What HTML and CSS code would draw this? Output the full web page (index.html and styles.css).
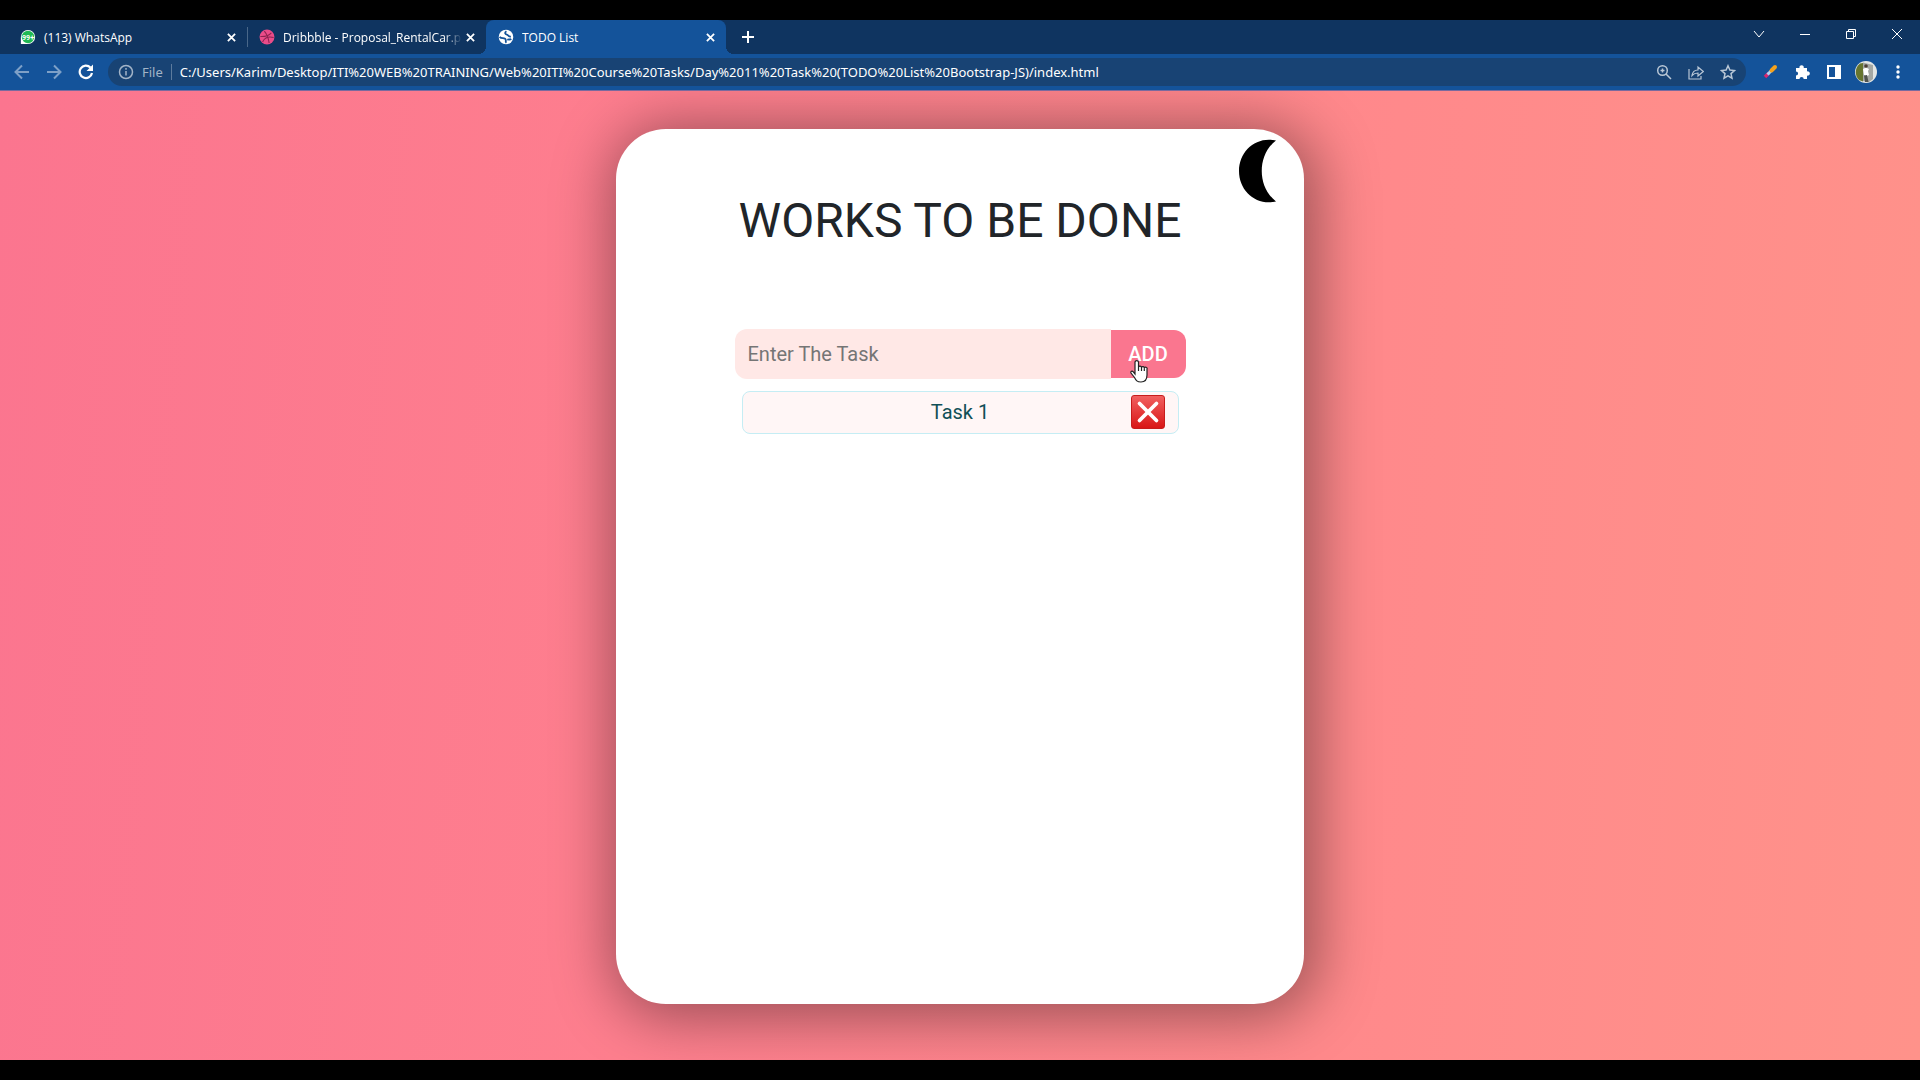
FILE: index.html
```html
<!DOCTYPE html>
<html lang="en">
<head>
<meta charset="utf-8">
<meta name="viewport" content="width=device-width, initial-scale=1">
<title>TODO List</title>
<link rel="stylesheet" href="styles.css">
</head>
<body>
<div class="screen">
  <header class="browser">
    <div class="tab-strip">
      <div class="tab">
        <svg class="tab-icon" viewBox="0 0 18 18"><path d="M1 17V9A8 8 0 1 1 9 17Z" fill="#fff"/><circle cx="9" cy="9" r="7" fill="#20b954"/><text x="9" y="12" class="badge-text">99+</text></svg>
        <span class="tab-title">(113) WhatsApp</span>
        <button class="tab-close" aria-label="Close WhatsApp tab"><svg viewBox="0 0 10 10"><path d="M1 1l8 8M9 1l-8 8"/></svg></button>
      </div>
      <div class="tab tab-second">
        <svg class="tab-icon" viewBox="0 0 18 18"><circle cx="9" cy="9" r="8.400" fill="#ea4c89"/><path d="M6 2.400c3 3.500 4.600 7.600 5.400 13.400M1.500 8.500c5 .2 9.300-.6 12.400-4.200M4 14.600c2.300-4.800 6.600-6.600 12.500-5" fill="none" stroke="#8d2350" stroke-width="1.200"/></svg>
        <span class="tab-title tab-title-fade">Dribbble - Proposal_RentalCar.pn</span>
        <button class="tab-close" aria-label="Close Dribbble tab"><svg viewBox="0 0 10 10"><path d="M1 1l8 8M9 1l-8 8"/></svg></button>
      </div>
      <div class="tab tab-active">
        <svg class="tab-icon" viewBox="0 0 18 18"><circle cx="9" cy="9" r="8.200" fill="#fff"/><path d="M1.800 8.800C4 11.500 6 9.500 8 11s-.5 3 1.500 4.500M9.500 2.500c-2.500 1.500-1.500 3.500.5 3.800s1 2.500 4.500 2.200M10.500 12.200c2-1 2.500.3 4.500-1" fill="none" stroke="#14539a" stroke-width="2"/></svg>
        <span class="tab-title">TODO List</span>
        <button class="tab-close" aria-label="Close TODO List tab"><svg viewBox="0 0 10 10"><path d="M1 1l8 8M9 1l-8 8"/></svg></button>
      </div>
      <button class="new-tab" aria-label="New tab"><svg viewBox="0 0 12 12"><path d="M6 0v12M0 6h12"/></svg></button>
      <div class="window-controls">
        <button aria-label="Search tabs"><svg class="thin" viewBox="0 0 12 12"><path d="M1 3l5 6 5-6"/></svg></button>
        <button aria-label="Minimize"><svg class="thin" viewBox="0 0 12 12"><path d="M1 6.500h10"/></svg></button>
        <button aria-label="Restore"><svg class="thin" viewBox="0 0 12 12"><path d="M1.500 3.500h7v7h-7zM3.500 3.500v-2h7v7h-2"/></svg></button>
        <button aria-label="Close"><svg class="thin" viewBox="0 0 12 12"><path d="M1 1l10 10M11 1L1 11"/></svg></button>
      </div>
    </div>
    <div class="toolbar">
      <nav class="nav-buttons">
        <button class="dim" aria-label="Back"><svg viewBox="0 0 16 16"><path d="M15 8H2M8 1.500L1.500 8 8 14.500"/></svg></button>
        <button class="dim" aria-label="Forward"><svg viewBox="0 0 16 16"><path d="M1 8h13M8 1.500L14.500 8 8 14.500"/></svg></button>
        <button aria-label="Reload"><svg viewBox="0 0 16 16"><path d="M14 9A6.200 6.200 0 1 1 12.400 3.600" stroke-width="2.200"/><path d="M15 .5V7H8.500Z" fill="#fff" stroke="none"/></svg></button>
      </nav>
      <div class="address">
        <svg class="info" viewBox="0 0 16 16"><circle cx="8" cy="8" r="6.500"/><path d="M8 7v4.500M8 4v1.700"/></svg>
        <span class="scheme">File</span>
        <input class="url" aria-label="Address" value="C:/Users/Karim/Desktop/ITI%20WEB%20TRAINING/Web%20ITI%20Course%20Tasks/Day%2011%20Task%20(TODO%20List%20Bootstrap-JS)/index.html">
        <div class="address-actions">
          <button aria-label="Zoom"><svg viewBox="0 0 16 16"><circle cx="6.500" cy="6.500" r="4.800"/><path d="M10 10l5 5M6.500 4.500v4M4.500 6.500h4"/></svg></button>
          <button aria-label="Share"><svg viewBox="0 0 16 16"><path d="M1 5v10h12v-3M4 11.500C4.500 8 7 6 10 6V3l5.300 4.500L10 12V9C7.500 9 5.500 9.800 4 11.500Z" stroke-width="1.200"/></svg></button>
          <button aria-label="Bookmark"><svg viewBox="0 0 16 16"><path d="M8 1.800l1.900 4.300 4.600.4-3.500 3.100 1 4.600L8 11.800l-4 2.400 1-4.600-3.500-3.100 4.600-.4Z"/></svg></button>
        </div>
      </div>
      <div class="extensions">
        <button aria-label="Color picker"><svg viewBox="0 0 16 16"><path d="M3 13l4-4" stroke="#d7266f" stroke-width="3.500"/><path d="M5.500 10.500l4-4" stroke="#a9d2f5" stroke-width="3"/><path d="M9.500 6.500L13 3" stroke="#f6a21c" stroke-width="4" stroke-linecap="round"/></svg></button>
        <button aria-label="Extensions"><svg viewBox="0 0 16 16"><path d="M2 4h3.500a2.200 2.200 0 1 1 4.200 0H13v3.400a2.200 2.200 0 1 1 0 4.200V15H9.700a2.100 2.100 0 0 0-4.200 0H2v-3.400a2.100 2.100 0 0 0 0-4.200Z" fill="#fff" stroke="none"/></svg></button>
        <button aria-label="Side panel"><svg viewBox="0 0 16 16"><path d="M2 2h12v12H2Z" stroke-width="2"/><path d="M9 2h5v12H9Z" fill="#fff" stroke="none"/></svg></button>
        <button class="profile" aria-label="Profile"><svg viewBox="0 0 22 22"><circle cx="11" cy="11" r="11" fill="#e3e6e5"/><path d="M5 2.600A11 11 0 0 0 4 19l4 1.500V2Z" fill="#66752f"/><path d="M8 1.500l10 2.500v14L14 21l-6-1Z" fill="#a5a8a4"/><path d="M8 8l3-1.500L14 8l-1 2 1 4-3 1.500L9 14Z" fill="#fff"/><circle cx="11" cy="5" r="1.800" fill="#4c3e37"/><path d="M9 14.500l3-.5 1.500 7H10Z" fill="#50534f"/></svg></button>
        <button aria-label="Menu"><svg viewBox="0 0 16 16"><g fill="#fff" stroke="none"><circle cx="8" cy="3" r="1.700"/><circle cx="8" cy="8" r="1.700"/><circle cx="8" cy="13" r="1.700"/></g></svg></button>
      </div>
    </div>
  </header>
  <main class="page">
    <section class="card">
      <button class="theme" aria-label="Dark mode"><svg viewBox="0 0 38 64"><path d="M38 1.500C18 -3 1 12 1 32S18 67 38 62.500C19 48 19 16 38 1.500Z"/></svg></button>
      <h1>WORKS TO BE DONE</h1>
      <form class="task-form">
        <input class="task-input" type="text" placeholder="Enter The Task" aria-label="Task">
        <button class="add" type="button">ADD
          <svg class="pointer" viewBox="0 0 18 24"><path d="M5 15V3a1.800 1.800 0 0 1 3.500 0v5a1.600 1.600 0 0 1 3 .3 1.500 1.500 0 0 1 2.800.8 1.400 1.400 0 0 1 2.700.9v6c0 4-2 7-6 7-4 0-5-1.500-6.500-4.500L1 14c-.6-1.500 1-2.600 2.300-1.200ZM8.500 8v4M11.500 8.500v3.500M14.300 9.300V12"/></svg>
        </button>
      </form>
      <ul class="tasks">
        <li class="task">
          <span>Task 1</span>
          <button class="delete" type="button" aria-label="Delete Task 1"><svg viewBox="0 0 34 34"><path d="M8 8l18 18M26 8L8 26"/></svg></button>
        </li>
      </ul>
    </section>
  </main>
</div>
</body>
</html>
```
FILE: styles.css
```css
* { box-sizing: border-box; }
body { margin: 0; background: #000; }
button { padding: 0; border: 0; background: none; color: inherit; font: inherit; }
svg { display: block; }

.screen {
  display: flex;
  flex-direction: column;
  min-height: 100vh;
  padding: 20px 0;
}

/* Browser frame */
.browser {
  color: #fff;
  font-family: "Open Sans", sans-serif;
  font-size: 12px;
}
.browser svg { fill: none; stroke: #fff; stroke-width: 2; }
.tab-strip {
  display: flex;
  height: 34px;
  background: #0f3460;
}
.tab {
  display: flex;
  align-items: center;
  width: 240px;
  padding: 0 8px 0 20px;
}
.tab:first-child { width: 247px; }
.tab-second {
  position: relative;
  width: 239px;
  padding-left: 12px;
}
.tab-second::before {
  content: "";
  position: absolute;
  left: 0;
  top: 7px;
  width: 1px;
  height: 20px;
  background: #496789;
}
.tab-active {
  position: relative;
  padding-left: 12px;
  border-radius: 8px 8px 0 0;
  background: #14539a;
}
.tab-active::before,
.tab-active::after {
  content: "";
  position: absolute;
  bottom: 0;
  width: 8px;
  height: 8px;
}
.tab-active::before { left: -8px; background: radial-gradient(circle at 0 0, #0f3460 8px, #14539a 8px); }
.tab-active::after { right: -8px; background: radial-gradient(circle at 100% 0, #0f3460 8px, #14539a 8px); }
.browser .tab-icon { flex: none; width: 16px; height: 16px; margin-right: 8px; stroke: none; }
.badge-text { fill: #fff; font: bold 8px Roboto, sans-serif; text-anchor: middle; }
.tab-title { flex: 1; overflow: hidden; white-space: nowrap; }
.tab-title-fade { mask-image: linear-gradient(90deg, #000 90%, transparent); }
.tab-close { display: grid; place-items: center; width: 16px; height: 16px; }
.tab-close svg { width: 9px; height: 9px; }
.new-tab { display: grid; place-items: center; width: 44px; }
.new-tab svg { width: 12px; height: 12px; }
.window-controls { display: flex; margin-left: auto; }
.window-controls button { display: grid; place-items: center; width: 46px; height: 28px; }
.window-controls svg { width: 12px; height: 12px; }
.browser .thin { stroke-width: 1; }

.toolbar {
  display: flex;
  align-items: center;
  height: 37px;
  padding: 0 14px;
  background: #14539a;
  border-bottom: 1px solid #7a6a9e;
}
.nav-buttons { display: flex; gap: 16px; margin-right: 14px; }
.nav-buttons svg { width: 16px; height: 16px; }
.dim { opacity: .45; }
.address {
  display: flex;
  flex: 1;
  align-items: center;
  height: 28px;
  padding: 0 10px;
  border-radius: 14px;
  background: #184374;
  font-family: "Noto Sans", sans-serif;
  font-size: 13px;
}
.address .info { width: 16px; height: 16px; margin-right: 8px; stroke: #a3b4c7; stroke-width: 1.5; }
.scheme { padding-right: 8px; border-right: 1px solid #5d7b9d; color: #a3b4c7; line-height: 16px; }
.url {
  flex: 1;
  min-width: 0;
  padding: 0 8px;
  border: 0;
  outline: 0;
  background: none;
  color: #fff;
  font: inherit;
}
.address-actions { display: flex; gap: 16px; }
.address-actions svg { width: 16px; height: 16px; stroke: #b9c7d6; stroke-width: 1.5; }
.extensions { display: flex; align-items: center; gap: 16px; margin-left: 16px; }
.extensions svg { width: 16px; height: 16px; }
.extensions .profile { margin: 0 -3px; }
.extensions .profile svg { width: 22px; height: 22px; stroke: none; }

/* To-do page */
.page {
  display: grid;
  flex: 1;
  grid-template-columns: minmax(0, 688px);
  justify-content: center;
  padding: 38px 20px 56px;
  background: linear-gradient(95deg, #fb758f, #fe7f8e 35%, #ff898b 70%, #ff928a);
  overflow: hidden;
  font-family: Roboto, "Noto Sans", sans-serif;
  font-size: 20px;
}
.card {
  position: relative;
  display: flex;
  flex-direction: column;
  align-items: center;
  padding: 62px 20px 20px;
  border-radius: 50px;
  background: #fff;
  box-shadow: 5px 5px 60px 8px rgba(0, 0, 0, .4);
}
.theme { position: absolute; top: 10px; right: 28px; }
.theme svg { width: 38px; height: 64px; }
.card h1 {
  margin: 0 0 78px;
  color: #212529;
  font-size: 48px;
  font-weight: 400;
  line-height: 60px;
  text-align: center;
}
.task-form {
  display: flex;
  align-items: center;
  width: 100%;
  max-width: 451px;
}
.task-input {
  flex: 1;
  min-width: 0;
  height: 50px;
  padding: 0 13px;
  border: 0;
  border-radius: 12px 0 0 12px;
  background: #ffe8e6;
  color: #212529;
  font: inherit;
}
.task-input::placeholder { color: #757575; opacity: 1; }
.add {
  position: relative;
  width: 75px;
  height: 48px;
  border-radius: 0 12px 12px 0;
  background: #fa768f;
  color: #fff;
  font-weight: 500;
}
.pointer {
  position: absolute;
  left: 19px;
  top: 29px;
  width: 18px;
  height: 24px;
  fill: #fff;
  stroke: #222;
  stroke-width: 1.2;
}
.tasks {
  width: 100%;
  max-width: 437px;
  margin: 12px 0 0;
  padding: 0;
  list-style: none;
}
.task {
  display: grid;
  grid-template-columns: 1fr auto 1fr;
  align-items: center;
  height: 43px;
  padding: 0 13px 2px;
  border: 1px solid #c5edf4;
  border-radius: 8px;
  background: #fff6f6;
  color: #115057;
}
.task span { grid-column: 2; }
.delete { justify-self: end; }
.delete svg {
  width: 34px;
  height: 34px;
  border: 1px solid #c71c1c;
  border-radius: 3px;
  background: linear-gradient(#f16060, #d91616);
  stroke: #fff;
  stroke-width: 4;
  stroke-linecap: round;
}
```
